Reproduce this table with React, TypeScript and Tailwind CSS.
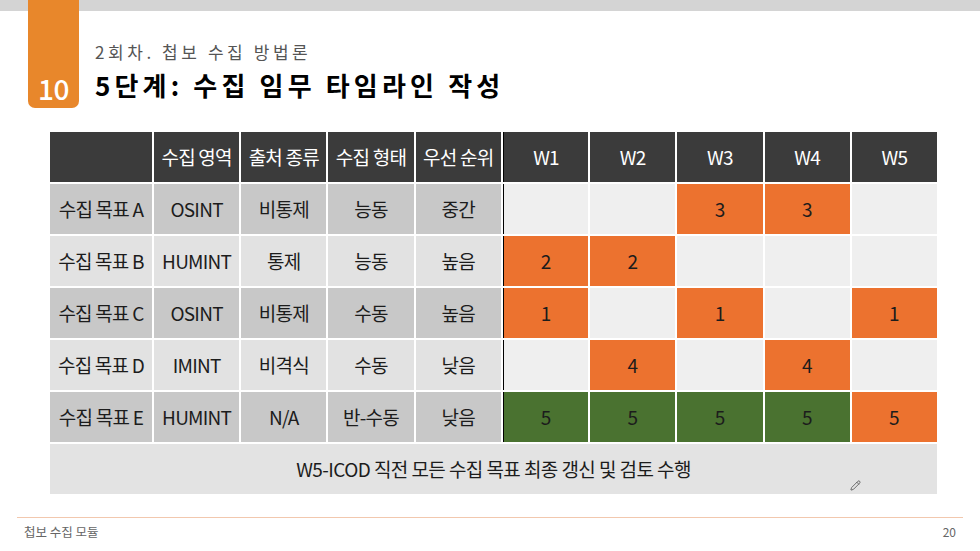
import React from 'react';
import { Pencil } from 'lucide-react';

type Cell = number | null;

type Row = {
  label: string;
  area: string;
  source: string;
  form: string;
  priority: string;
  shade: 'dark' | 'light';
  weeks: Cell[];
  colors: ('o' | 'g' | null)[];
};

const rows: Row[] = [
  { label: '수집 목표 A', area: 'OSINT', source: '비통제', form: '능동', priority: '중간', shade: 'dark', weeks: [null, null, 3, 3, null], colors: [null, null, 'o', 'o', null] },
  { label: '수집 목표 B', area: 'HUMINT', source: '통제', form: '능동', priority: '높음', shade: 'light', weeks: [2, 2, null, null, null], colors: ['o', 'o', null, null, null] },
  { label: '수집 목표 C', area: 'OSINT', source: '비통제', form: '수동', priority: '높음', shade: 'dark', weeks: [1, null, 1, null, 1], colors: ['o', null, 'o', null, 'o'] },
  { label: '수집 목표 D', area: 'IMINT', source: '비격식', form: '수동', priority: '낮음', shade: 'light', weeks: [null, 4, null, 4, null], colors: [null, 'o', null, 'o', null] },
  { label: '수집 목표 E', area: 'HUMINT', source: 'N/A', form: '반-수동', priority: '낮음', shade: 'dark', weeks: [5, 5, 5, 5, 5], colors: ['g', 'g', 'g', 'g', 'o'] },
];

const headers = ['', '수집 영역', '출처 종류', '수집 형태', '우선 순위', 'W1', 'W2', 'W3', 'W4', 'W5'];

const font = { fontFamily: '"Noto Sans CJK KR", "Noto Sans", sans-serif' };

const App: React.FC = () => {
  return (
    <div className="w-[980px] h-[551px] bg-white flex flex-col overflow-hidden" style={font}>
      {/* slide header */}
      <div className="flex h-[108px]">
        <div className="w-[28px] h-[11px] bg-[#d4d4d4]" />
        <div className="w-[51px] h-[108px] bg-[#e8872b] rounded-b-[7px] flex items-end justify-center pb-[5px]">
          <span className="text-white text-[28px] font-medium leading-none mb-[1px] tracking-[-0.02em]">10</span>
        </div>
        <div className="flex-1 flex flex-col">
          <div className="h-[11px] bg-[#d4d4d4]" />
          <div className="pl-[16px] pt-[29px] text-[17px] leading-[24px] text-[#555] tracking-[0.21em]">
            2회차. 첩보 수집 방법론
          </div>
          <div className="pl-[16px] mt-[4px] text-[26px] leading-[34px] font-bold text-black tracking-[0.16em]">
            5단계: 수집 임무 타임라인 작성
          </div>
        </div>
      </div>

      {/* timeline table */}
      <div className="ml-[50px] mt-[24px] w-[887px] grid grid-cols-[102px_repeat(9,1fr)] auto-rows-[50px] gap-[2px] bg-white text-[19px] text-[#1c1c1c]">
        {headers.map((h, i) => (
          <div
            key={i}
            className={`bg-[#3b3b3b] text-white flex items-center justify-center tracking-[-0.04em] ${i === 5 ? 'border-l border-black' : ''}`}
          >
            {h}
          </div>
        ))}
        {rows.map((r) => {
          const base = r.shade === 'dark' ? 'bg-[#c8c8c8]' : 'bg-[#e2e2e2]';
          return (
            <React.Fragment key={r.label}>
              {[r.label, r.area, r.source, r.form, r.priority].map((t, i) => (
                <div key={i} className={`${base} flex items-center justify-center tracking-[-0.04em] whitespace-nowrap`}>
                  {t}
                </div>
              ))}
              {r.weeks.map((w, i) => {
                const c = r.colors[i];
                const bg = c === 'o' ? 'bg-[#ec722f]' : c === 'g' ? 'bg-[#4a7230]' : 'bg-[#efefef]';
                return (
                  <div
                    key={i}
                    className={`${bg} flex items-center justify-center ${i === 0 ? 'border-l border-black' : ''}`}
                  >
                    {w ?? ''}
                  </div>
                );
              })}
            </React.Fragment>
          );
        })}
        <div className="col-span-10 bg-[#e3e3e3] relative flex items-center justify-center tracking-[-0.03em]">
          W5-ICOD 직전 모든 수집 목표 최종 갱신 및 검토 수행
          <Pencil className="absolute left-[800px] top-[36px] w-[11px] h-[11px] text-[#444]" strokeWidth={1.6} />
        </div>
      </div>

      {/* footer */}
      <div className="mt-[23px] mx-[17px] h-px bg-[#f2c8ae]" />
      <div className="flex justify-between items-center pl-[24px] pr-[24px] mt-[5px] text-[12.5px] text-[#666]">
        <span>첩보 수집 모듈</span>
        <span className="text-[12px]">20</span>
      </div>
    </div>
  );
};

export default App;
